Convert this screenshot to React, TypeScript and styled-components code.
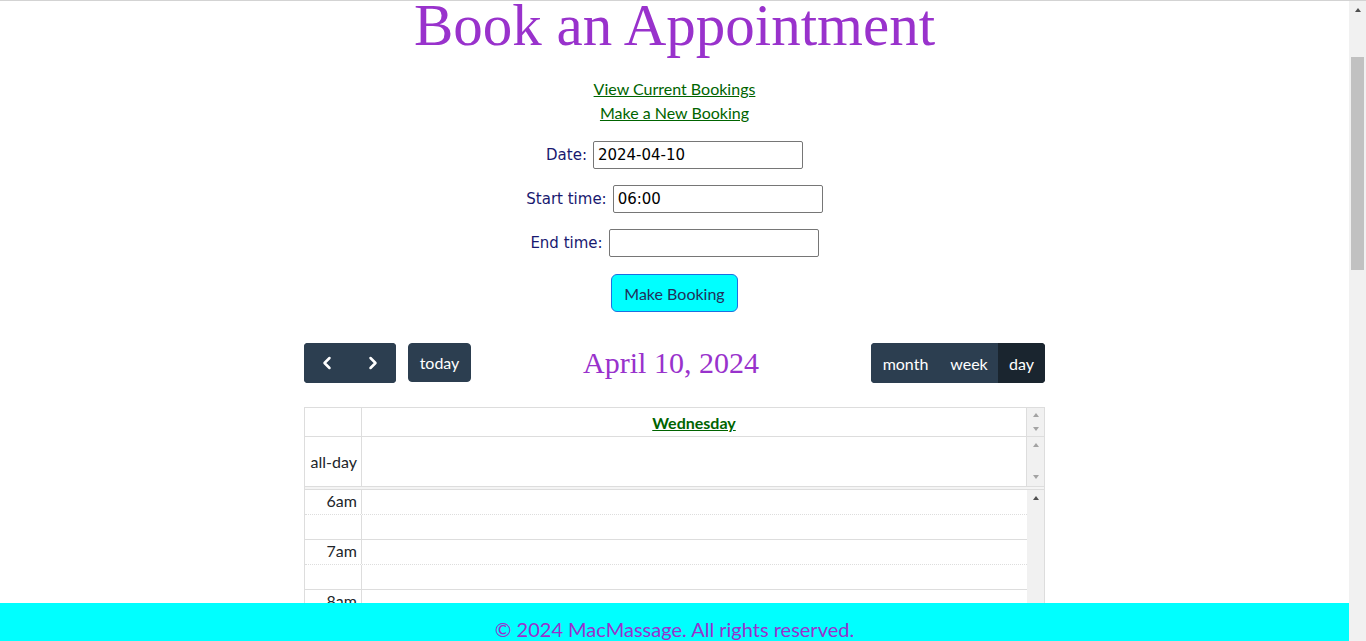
import React from 'react';
import styled, { createGlobalStyle } from 'styled-components';
import { ChevronLeft, ChevronRight } from 'lucide-react';

const GlobalStyle = createGlobalStyle`
  html, body {
    margin: 0;
    padding: 0;
    height: 100%;
    overflow: hidden;
    background: #fff;
  }
  #root {
    height: 100%;
  }
`;

/* Shell: page + the window scrollbar */
const Shell = styled.div`
  display: flex;
  height: 100vh;
  border-top: 1px solid #d3d3d3;
  box-sizing: border-box;
`;

const Page = styled.div`
  flex: 1;
  min-width: 0;
  display: flex;
  flex-direction: column;
`;

const Content = styled.main`
  flex: 1;
  min-height: 0;
  overflow: hidden;
  display: flex;
  flex-direction: column;
  align-items: center;
  font-family: Lato, "Open Sans", sans-serif;
`;

const WinScrollbar = styled.div`
  flex: 0 0 17px;
  background: #f1f1f1;
  display: flex;
  flex-direction: column;
  align-items: center;
`;

const ScrollArrowBox = styled.div`
  height: 17px;
  width: 100%;
  display: flex;
  align-items: center;
  justify-content: center;
`;

const Thumb = styled.div`
  width: 13px;
  height: 213px;
  margin-top: 39px;
  background: #c1c1c1;
`;

const Arrow = styled.span<{ $dir: 'up' | 'down'; $dark?: boolean }>`
  display: block;
  width: 0;
  height: 0;
  border-left: 3.5px solid transparent;
  border-right: 3.5px solid transparent;
  ${(p) =>
    p.$dir === 'up'
      ? `border-bottom: 4px solid ${p.$dark ? '#505050' : '#a3a3a3'};`
      : `border-top: 4px solid ${p.$dark ? '#505050' : '#a3a3a3'};`}
`;

/* Heading and links */
const Title = styled.h1`
  margin: 0;
  font-family: "Liberation Serif", "Times New Roman", serif;
  font-weight: normal;
  font-size: 59px;
  line-height: 49px;
  color: #9932cc;
`;

const NavLinks = styled.nav`
  margin-top: 27px;
  display: flex;
  flex-direction: column;
  align-items: center;
  font-size: 16px;
  line-height: 24px;
`;

const NavLink = styled.a`
  color: #006400;
  text-decoration: underline;
`;

/* Booking form */
const Form = styled.form`
  margin-top: 16px;
  display: flex;
  flex-direction: column;
  align-items: center;
  gap: 16px;
  font-family: "DejaVu Sans", Verdana, sans-serif;
  font-size: 15px;
`;

const FormRow = styled.div`
  display: flex;
  align-items: center;
  gap: 6px;
  height: 28px;
`;

const Label = styled.label`
  color: #191970;
`;

const Input = styled.input`
  width: 210px;
  height: 28px;
  box-sizing: border-box;
  border: 1px solid #767676;
  border-radius: 2px;
  padding: 0 4px;
  font-family: "DejaVu Sans", Verdana, sans-serif;
  font-size: 15px;
  color: #000;
`;

const SubmitButton = styled.button`
  width: 127px;
  height: 38px;
  margin-top: 1px;
  background: #00ffff;
  border: 1px solid #1e6fe0;
  border-radius: 6px;
  font-family: Lato, "Open Sans", sans-serif;
  font-size: 16px;
  color: #22305a;
  cursor: pointer;
`;

/* Calendar toolbar */
const Calendar = styled.section`
  width: 741px;
  margin-top: 31px;
`;

const Toolbar = styled.div`
  display: flex;
  align-items: flex-start;
  justify-content: space-between;
  height: 40px;
`;

const ToolbarChunk = styled.div`
  display: flex;
  align-items: flex-start;
  gap: 12px;
`;

const ButtonGroup = styled.div`
  display: flex;
  border-radius: 4px;
  overflow: hidden;
`;

const ToolButton = styled.button<{ $active?: boolean; $w?: number }>`
  height: 40px;
  ${(p) => (p.$w ? `width: ${p.$w}px;` : 'padding: 0 11px;')}
  display: flex;
  align-items: center;
  justify-content: center;
  background: ${(p) => (p.$active ? '#1a252f' : '#2c3e50')};
  border: 1px solid ${(p) => (p.$active ? '#1a252f' : '#2c3e50')};
  color: #fff;
  font-family: Lato, "Open Sans", sans-serif;
  font-size: 16px;
  cursor: pointer;
`;

const TodayButton = styled(ToolButton)`
  height: 39px;
  border-radius: 4px;
`;

const ToolbarTitle = styled.h2`
  margin: 2px 0 0;
  font-family: "Liberation Serif", "Times New Roman", serif;
  font-weight: normal;
  font-size: 30px;
  line-height: 36px;
  color: #9932cc;
`;

/* Calendar grid */
const Grid = styled.div`
  margin-top: 24px;
  border: 1px solid #ddd;
  border-bottom: none;
`;

const HeadRow = styled.div<{ $h: number }>`
  display: grid;
  grid-template-columns: 57px 1fr 17px;
  height: ${(p) => p.$h}px;
  box-sizing: border-box;
  border-bottom: 1px solid #ddd;
`;

const AxisCell = styled.div`
  border-right: 1px solid #ddd;
  display: flex;
  align-items: center;
  justify-content: flex-end;
  padding-right: 4px;
  font-size: 16px;
  color: #212529;
`;

const DayCell = styled.div`
  border-right: 1px solid #ddd;
  display: flex;
  align-items: center;
  justify-content: center;
`;

const DayLink = styled.a`
  font-weight: bold;
  font-size: 16px;
  color: #006400;
  text-decoration: underline;
`;

const Gutter = styled.div<{ $pad?: string }>`
  background: #f1f1f1;
  display: flex;
  flex-direction: column;
  align-items: center;
  justify-content: space-between;
  padding: ${(p) => p.$pad || '5px 0'};
`;

const Divider = styled.div`
  height: 2px;
  background: #f4f4f4;
  border-bottom: 1px solid #ddd;
`;

const Body = styled.div`
  display: flex;
`;

const Slots = styled.div`
  flex: 1;
`;

const SlotRow = styled.div<{ $minor: boolean }>`
  display: grid;
  grid-template-columns: 57px 1fr;
  height: 25px;
  box-sizing: border-box;
  border-bottom: 1px ${(p) => (p.$minor ? 'dotted' : 'solid')} #ddd;
`;

const SlotLabel = styled.div`
  border-right: 1px solid #ddd;
  text-align: right;
  padding-right: 4px;
  font-size: 16px;
  line-height: 22px;
  color: #212529;
  white-space: nowrap;
`;

const SlotLane = styled.div``;

const BodyGutter = styled(Gutter)`
  width: 17px;
  justify-content: flex-start;
  padding-top: 6px;
`;

/* Footer */
const Footer = styled.footer`
  flex: 0 0 38px;
  box-sizing: border-box;
  padding-top: 14px;
  background: #00ffff;
  color: #9932cc;
  text-align: center;
  font-family: Lato, "Open Sans", sans-serif;
  font-size: 20px;
  line-height: 24px;
  overflow: hidden;
  white-space: nowrap;
`;

const hours = ['6am', '7am', '8am', '9am', '10am', '11am', '12pm', '1pm', '2pm', '3pm', '4pm', '5pm', '6pm', '7pm', '8pm'];

export default function App() {
  return (
    <>
      <GlobalStyle />
      <Shell>
        <Page>
          <Content>
            <Title>Book an Appointment</Title>
            <NavLinks>
              <NavLink href="#bookings">View Current Bookings</NavLink>
              <NavLink href="#new">Make a New Booking</NavLink>
            </NavLinks>

            <Form onSubmit={(e) => e.preventDefault()}>
              <FormRow>
                <Label htmlFor="date">Date:</Label>
                <Input id="date" type="text" defaultValue="2024-04-10" />
              </FormRow>
              <FormRow>
                <Label htmlFor="start">Start time:</Label>
                <Input id="start" type="text" defaultValue="06:00" />
              </FormRow>
              <FormRow>
                <Label htmlFor="end">End time:</Label>
                <Input id="end" type="text" defaultValue="" />
              </FormRow>
              <SubmitButton type="submit">Make Booking</SubmitButton>
            </Form>

            <Calendar>
              <Toolbar>
                <ToolbarChunk>
                  <ButtonGroup>
                    <ToolButton $w={46} aria-label="prev">
                      <ChevronLeft size={20} strokeWidth={3} />
                    </ToolButton>
                    <ToolButton $w={46} aria-label="next">
                      <ChevronRight size={20} strokeWidth={3} />
                    </ToolButton>
                  </ButtonGroup>
                  <TodayButton $w={63}>today</TodayButton>
                </ToolbarChunk>
                <ToolbarTitle>April 10, 2024</ToolbarTitle>
                <ToolbarChunk>
                  <ButtonGroup>
                    <ToolButton $w={69}>month</ToolButton>
                    <ToolButton $w={58}>week</ToolButton>
                    <ToolButton $w={47} $active>day</ToolButton>
                  </ButtonGroup>
                </ToolbarChunk>
              </Toolbar>

              <Grid>
                <HeadRow $h={29}>
                  <AxisCell />
                  <DayCell>
                    <DayLink href="#day">Wednesday</DayLink>
                  </DayCell>
                  <Gutter>
                    <Arrow $dir="up" />
                    <Arrow $dir="down" />
                  </Gutter>
                </HeadRow>
                <HeadRow $h={50}>
                  <AxisCell>all-day</AxisCell>
                  <DayCell />
                  <Gutter $pad="6px 0 7px">
                    <Arrow $dir="up" />
                    <Arrow $dir="down" />
                  </Gutter>
                </HeadRow>
                <Divider />
                <Body>
                  <Slots>
                    {hours.map((h) => (
                      <React.Fragment key={h}>
                        <SlotRow $minor>
                          <SlotLabel>{h}</SlotLabel>
                          <SlotLane />
                        </SlotRow>
                        <SlotRow $minor={false}>
                          <SlotLabel />
                          <SlotLane />
                        </SlotRow>
                      </React.Fragment>
                    ))}
                  </Slots>
                  <BodyGutter>
                    <Arrow $dir="up" $dark />
                  </BodyGutter>
                </Body>
              </Grid>
            </Calendar>
          </Content>
          <Footer>© 2024 MacMassage. All rights reserved.</Footer>
        </Page>
        <WinScrollbar>
          <ScrollArrowBox>
            <Arrow $dir="up" $dark />
          </ScrollArrowBox>
          <Thumb />
        </WinScrollbar>
      </Shell>
    </>
  );
}
